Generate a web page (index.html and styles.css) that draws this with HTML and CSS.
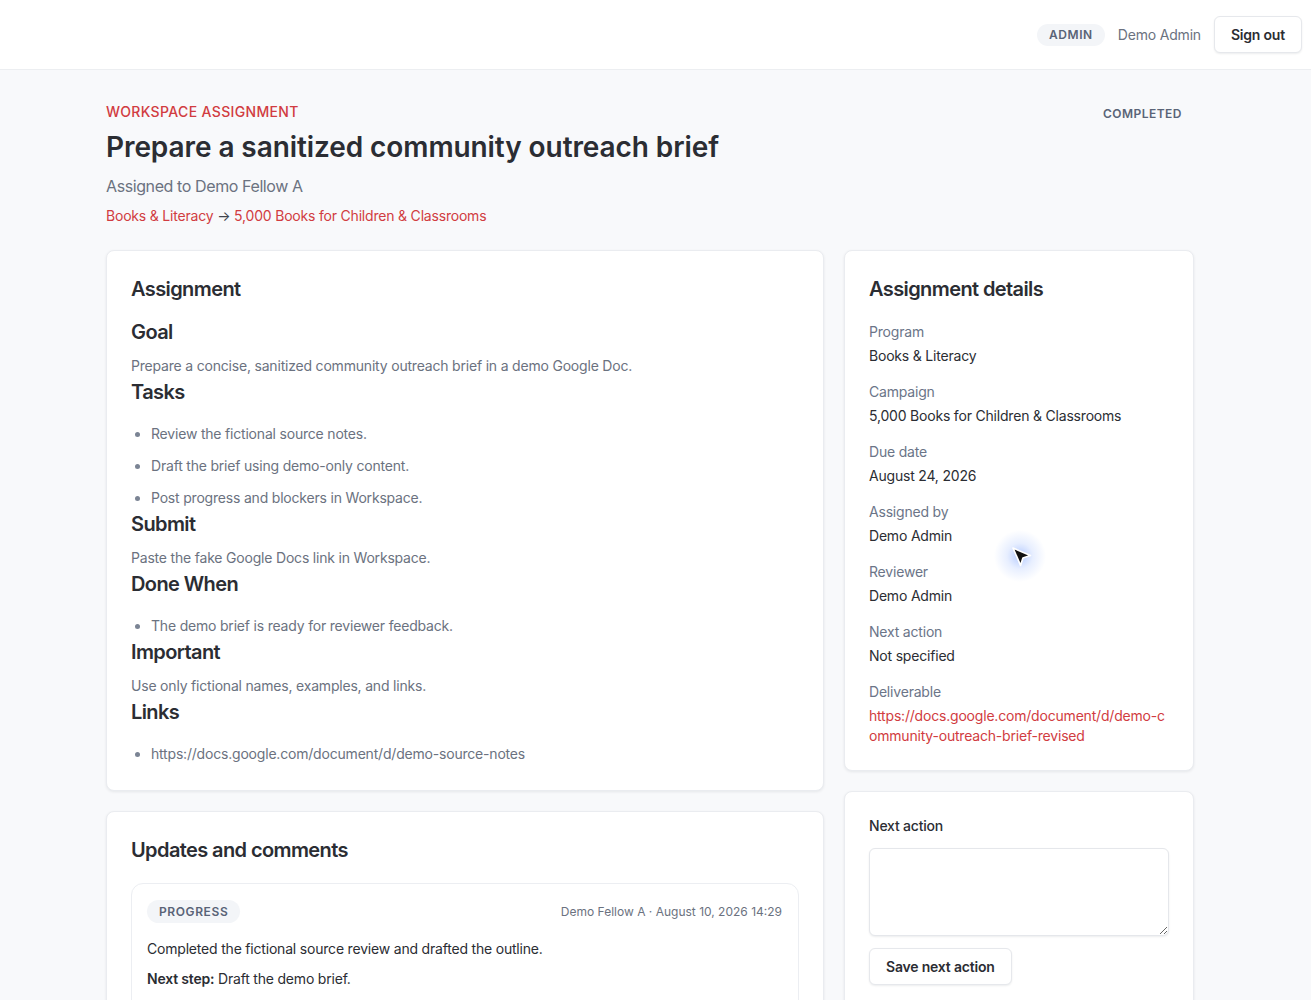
FILE: index.html
```html
<!DOCTYPE html>
<html lang="en">
<head>
    <meta charset="UTF-8">
    <meta name="viewport" content="width=device-width, initial-scale=1.0">
    <title>Workspace assignment</title>
    <link rel="stylesheet" href="styles.css">
</head>
<body>
    <header class="topbar">
        <span class="role-pill">ADMIN</span>
        <span class="user-name">Demo Admin</span>
        <button class="btn">Sign out</button>
    </header>

    <main class="page">
        <div class="page-head">
            <div>
                <div class="eyebrow">WORKSPACE ASSIGNMENT</div>
                <h1 class="page-title">Prepare a sanitized community outreach brief</h1>
                <div class="assignee">Assigned to Demo Fellow A</div>
                <div class="crumbs">
                    <a href="#">Books &amp; Literacy</a>
                    <span class="crumb-arrow">&rarr;</span>
                    <a href="#">5,000 Books for Children &amp; Classrooms</a>
                </div>
            </div>
            <span class="status">COMPLETED</span>
        </div>

        <div class="layout">
            <div class="col">
                <section class="card">
                    <h2 class="card-title">Assignment</h2>
                    <div class="brief">
                        <h3>Goal</h3>
                        <p>Prepare a concise, sanitized community outreach brief in a demo Google Doc.</p>
                        <h3>Tasks</h3>
                        <ul>
                            <li>Review the fictional source notes.</li>
                            <li>Draft the brief using demo-only content.</li>
                            <li>Post progress and blockers in Workspace.</li>
                        </ul>
                        <h3>Submit</h3>
                        <p>Paste the fake Google Docs link in Workspace.</p>
                        <h3>Done When</h3>
                        <ul>
                            <li>The demo brief is ready for reviewer feedback.</li>
                        </ul>
                        <h3>Important</h3>
                        <p>Use only fictional names, examples, and links.</p>
                        <h3>Links</h3>
                        <ul>
                            <li>https://docs.google.com/document/d/demo-source-notes</li>
                        </ul>
                    </div>
                </section>

                <section class="card">
                    <h2 class="card-title">Updates and comments</h2>
                    <div class="update">
                        <div class="update-head">
                            <span class="tag">PROGRESS</span>
                            <span class="update-meta">Demo Fellow A &middot; August 10, 2026 14:29</span>
                        </div>
                        <p class="update-body">Completed the fictional source review and drafted the outline.</p>
                        <p class="update-body"><strong>Next step:</strong> Draft the demo brief.</p>
                    </div>
                </section>
            </div>

            <div class="col">
                <section class="card">
                    <h2 class="card-title">Assignment details</h2>
                    <dl class="details">
                        <div class="detail">
                            <dt>Program</dt>
                            <dd>Books &amp; Literacy</dd>
                        </div>
                        <div class="detail">
                            <dt>Campaign</dt>
                            <dd>5,000 Books for Children &amp; Classrooms</dd>
                        </div>
                        <div class="detail">
                            <dt>Due date</dt>
                            <dd>August 24, 2026</dd>
                        </div>
                        <div class="detail">
                            <dt>Assigned by</dt>
                            <dd>Demo Admin</dd>
                        </div>
                        <div class="detail">
                            <dt>Reviewer</dt>
                            <dd>Demo Admin</dd>
                        </div>
                        <div class="detail">
                            <dt>Next action</dt>
                            <dd>Not specified</dd>
                        </div>
                        <div class="detail">
                            <dt>Deliverable</dt>
                            <dd><a class="deliverable" href="#">https://docs.google.com/document/d/demo-community-outreach-brief-revised</a></dd>
                        </div>
                    </dl>
                </section>

                <section class="card">
                    <form class="next-form">
                        <label class="field-label" for="next-action">Next action</label>
                        <textarea id="next-action" class="field"></textarea>
                        <div>
                            <button type="button" class="btn">Save next action</button>
                        </div>
                    </form>
                </section>
            </div>
        </div>
    </main>

    <!-- pointer with its highlight ring -->
    <div class="pointer">
        <svg width="24" height="24" viewBox="0 0 20 20">
            <path d="M2.5 2.5 L17 8.8 L10.8 10.8 L8.8 17 Z" fill="#111" stroke="#fff" stroke-width="1.4" stroke-linejoin="round"/>
        </svg>
    </div>
</body>
</html>
```

FILE: styles.css
```css
* {
    box-sizing: border-box;
}
body {
    margin: 0;
    background-color: #f8f9fb;
    color: #2b2d33;
    font-family: Inter, "Noto Sans", sans-serif;
    font-size: 14px;
    line-height: 20px;
    letter-spacing: -0.014em;
}
a {
    color: #d13c41;
    text-decoration: none;
}
.topbar {
    height: 70px;
    background-color: #fff;
    border-bottom: 1px solid #eceef1;
    display: flex;
    align-items: center;
    justify-content: flex-end;
    gap: 13px;
    padding: 0 9px 0 24px;
}
.role-pill {
    background-color: #f3f5f8;
    color: #596377;
    font-size: 12px;
    font-weight: 600;
    letter-spacing: 0.05em;
    line-height: 22px;
    padding: 0 12px;
    border-radius: 11px;
}
.user-name {
    color: #6b7280;
    font-size: 14px;
}
.btn {
    font-family: inherit;
    font-size: 14px;
    font-weight: 600;
    letter-spacing: -0.014em;
    color: #2b2d33;
    background-color: #fff;
    border: 1px solid #e6e8ec;
    border-radius: 6px;
    height: 37px;
    padding: 0 16px;
    box-shadow: 0 1px 2px rgba(16, 24, 40, 0.08);
    cursor: pointer;
}
.page {
    width: 1088px;
    margin-left: 106px;
    padding: 32px 0 40px;
}
.page-head {
    display: flex;
    justify-content: space-between;
    align-items: flex-start;
    margin-bottom: 24px;
}
.eyebrow {
    color: #d13c41;
    font-size: 14px;
    font-weight: 500;
    letter-spacing: 0.025em;
}
.page-title {
    margin: 7px 0 9px;
    font-size: 28px;
    line-height: 36px;
    font-weight: 600;
    letter-spacing: -0.003em;
    color: #2b2d33;
}
.assignee {
    color: #6b7280;
    font-size: 16px;
    line-height: 24px;
    letter-spacing: -0.025em;
    margin-bottom: 8px;
}
.crumbs {
    font-size: 14px;
}
.crumb-arrow {
    color: #3f434c;
}
.status {
    color: #5a6477;
    font-size: 12px;
    font-weight: 600;
    letter-spacing: 0.04em;
    line-height: 22px;
    padding: 0 12px;
    margin-top: 1px;
}
.layout {
    display: grid;
    grid-template-columns: 1fr 350px;
    gap: 20px;
    align-items: start;
}
.col {
    display: flex;
    flex-direction: column;
    gap: 20px;
}
.card {
    background-color: #fff;
    border: 1px solid #eaecf0;
    border-radius: 8px;
    box-shadow: 0 1px 3px rgba(16, 24, 40, 0.08);
    padding: 24px;
}
.card-title {
    margin: 0 0 15px;
    font-size: 20px;
    line-height: 28px;
    font-weight: 600;
    letter-spacing: -0.03em;
    color: #2b2d33;
}
.brief h3 {
    margin: 0 0 10px;
    font-size: 20px;
    line-height: 28px;
    font-weight: 600;
    letter-spacing: -0.03em;
    color: #2b2d33;
}
.brief p {
    margin: 0 0 2px;
    color: #6b7280;
}
.brief ul {
    margin: 0;
    padding: 8px 0 2px 20px;
    color: #6b7280;
}
.brief li + li {
    margin-top: 12px;
}
.brief li::marker {
    color: #7b8494;
}
.update {
    margin-top: 19px;
    border: 1px solid #eceef2;
    border-radius: 12px;
    padding: 16px 16px 16px 15px;
}
.update-head {
    display: flex;
    justify-content: space-between;
    align-items: center;
    margin-bottom: 16px;
}
.tag {
    background-color: #f3f5f8;
    color: #596377;
    font-size: 12px;
    font-weight: 600;
    letter-spacing: 0.05em;
    line-height: 23px;
    padding: 0 12px;
    border-radius: 12px;
}
.update-meta {
    color: #6b7280;
    font-size: 12px;
    letter-spacing: 0;
}
.update-body {
    margin: 0 0 10px;
    color: #2b2d33;
}
.update-body strong {
    font-weight: 600;
}
.details {
    margin: 19px 0 0;
    display: flex;
    flex-direction: column;
    gap: 16px;
}
.details dt {
    color: #6b7588;
}
.details dd {
    margin: 4px 0 0;
    color: #2b2d33;
}
.deliverable {
    word-break: break-all;
}
.next-form {
    display: flex;
    flex-direction: column;
    gap: 12px;
}
.field-label {
    font-weight: 500;
    color: #2b2d33;
}
.field {
    height: 88px;
    border: 1px solid #e5e7eb;
    border-radius: 6px;
    box-shadow: 0 1px 2px rgba(16, 24, 40, 0.08);
    font-family: inherit;
    font-size: 14px;
    padding: 8px 12px;
}
.pointer {
    position: absolute;
    left: 988px;
    top: 526px;
    width: 64px;
    height: 60px;
    display: flex;
    align-items: center;
    justify-content: center;
    background: radial-gradient(circle at 50% 50%, rgba(70, 125, 255, 0.4) 0, rgba(90, 140, 255, 0.14) 13px, rgba(90, 140, 255, 0) 26px);
}
.pointer svg {
    margin: 2px 0 0 4px;
}
```
